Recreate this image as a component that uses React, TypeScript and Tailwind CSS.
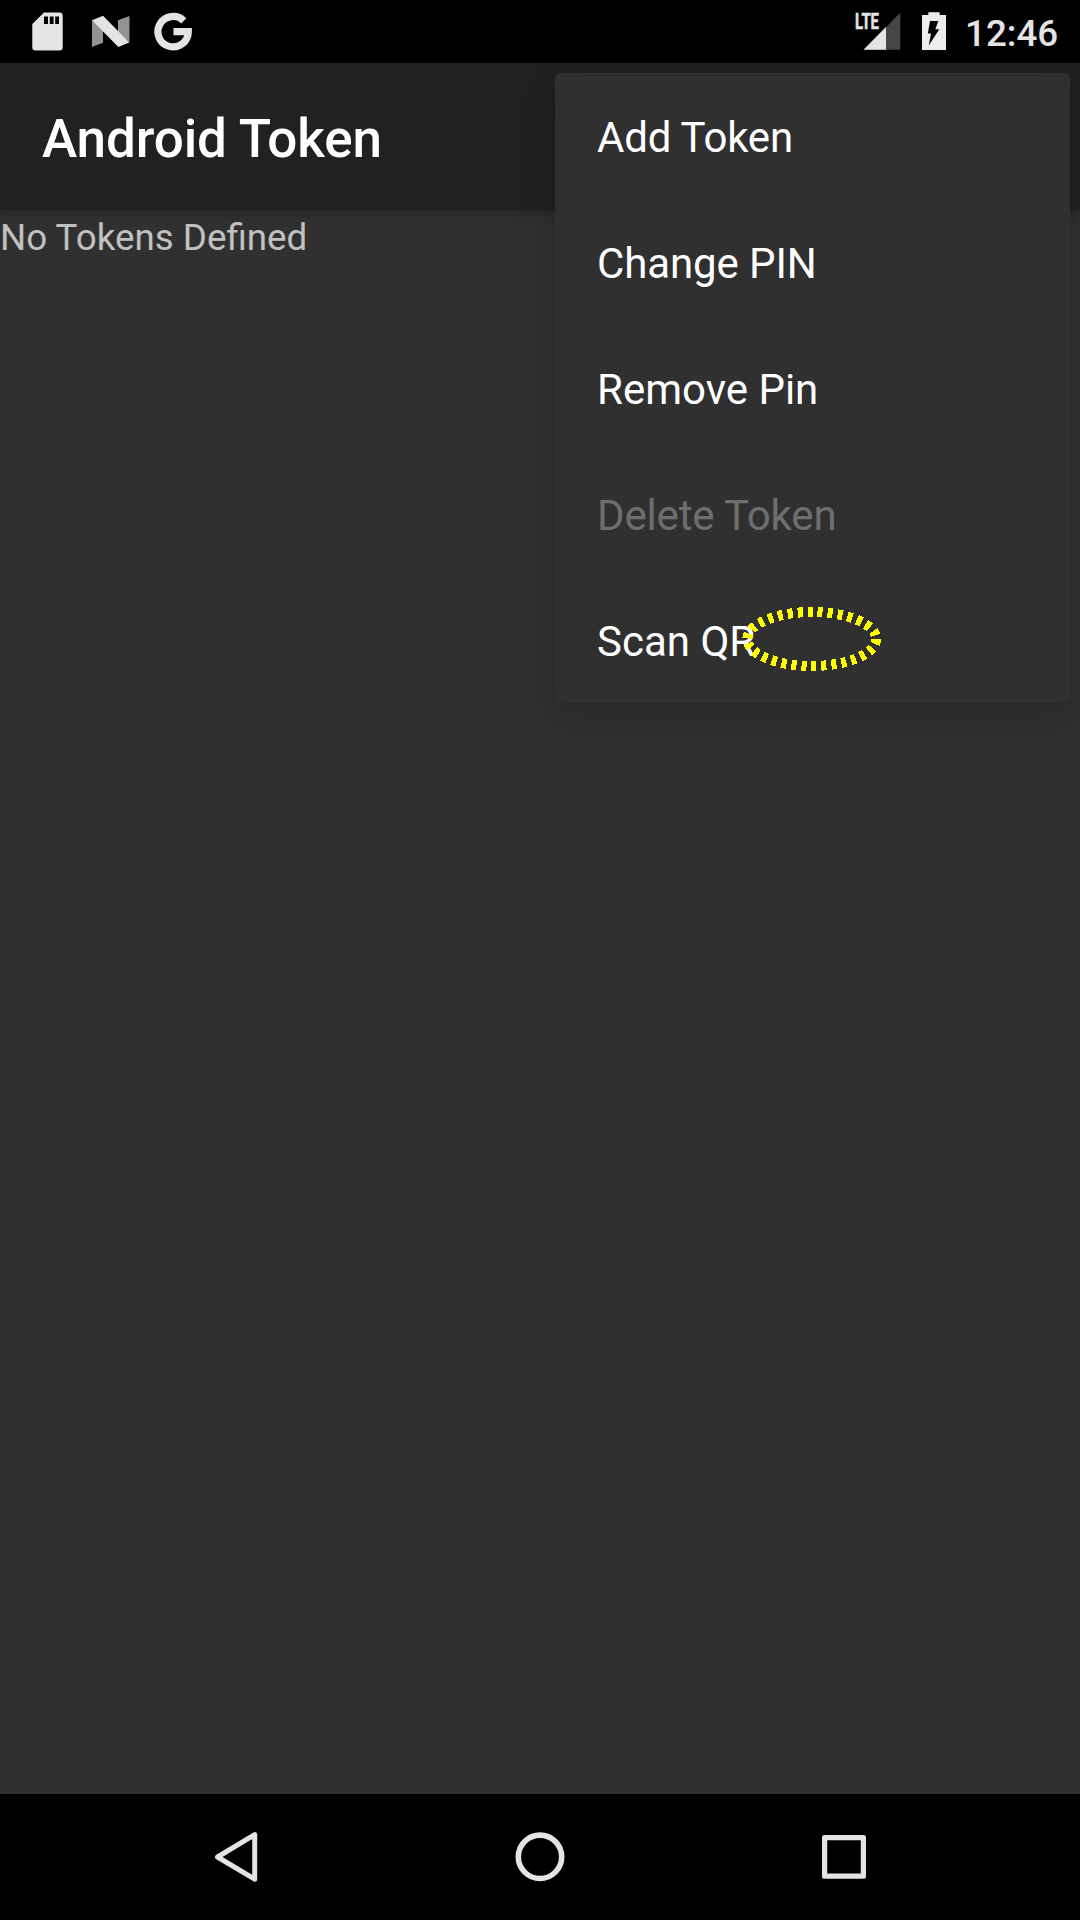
const menuItems = [
  { label: 'Add Token', style: 'text-white tracking-[-0.2px]' },
  { label: 'Change PIN', style: 'text-white tracking-[-0.1px]' },
  { label: 'Remove Pin', style: 'text-white' },
  { label: 'Delete Token', style: 'text-[#6e6e6e] tracking-[-0.15px]' },
  { label: 'Scan QR', style: 'text-white' },
];

function StatusBar() {
  return (
    <div className="flex h-[63px] items-start justify-between bg-black pr-[21px] pl-[32px]">
      <div className="flex">
        <svg width="31" height="63" viewBox="32 0 31 63" fill="#e4e4e4">
          <path
            fillRule="evenodd"
            d="M44 12.5H59.5Q62.7 12.5 62.7 15.7V47.3Q62.7 50.5 59.5 50.5H35.5Q32.3 50.5 32.3 47.3V24ZM44 16.5V24H48V16.5ZM49.8 16.5V24H53.6V16.5ZM55.2 16.5V24H59V16.5Z"
          />
        </svg>
        <svg className="ml-[28px]" width="39" height="63" viewBox="91 0 39 63">
          <path d="M92 20V47L103 42.7V30ZM118 20.3L129.5 16V42L118 34Z" fill="#929292" />
          <path d="M92 20.3L103 15.8L129.3 42.4L118.3 47Z" fill="#e4e4e4" />
        </svg>
        <svg className="ml-[24px]" width="40" height="63" viewBox="154 0 40 63">
          <path
            d="M183.8 20.9A15.2 15.2 0 1 0 188.3 31.7H173.5"
            fill="none"
            stroke="#e4e4e4"
            strokeWidth="7.2"
          />
        </svg>
      </div>
      <div className="flex">
        <svg width="48" height="63" viewBox="854 0 48 63">
          <text
            x="855"
            y="29"
            fill="#e4e4e4"
            stroke="#e4e4e4"
            strokeWidth="0.5"
            fontFamily="Roboto, sans-serif"
            fontWeight="700"
            fontSize="21.5"
            textLength="24"
            lengthAdjust="spacingAndGlyphs"
          >
            LTE
          </text>
          <path d="M863.5 49.7L900.3 12.8V49.7Z" fill="#464646" />
          <path d="M863.5 49.7L886 27V49.7Z" fill="#e4e4e4" />
        </svg>
        <svg className="ml-[18px]" width="28" height="63" viewBox="920 0 28 63">
          <path d="M928.3 12.3H939.7V15H946V50H922V15H928.3Z" fill="#ececec" />
          <path d="M930 21H938.3L935.3 29.3H939.3L928.7 45.5L931 33.5H927.8Z" fill="#000" />
        </svg>
        <span className="ml-[17px] w-[94px] pt-[6px] text-[36.75px] leading-[56px] font-medium whitespace-nowrap text-[#e4e4e4]">12:46</span>
      </div>
    </div>
  );
}

function NavigationBar() {
  return (
    <div className="flex h-[126px] items-center justify-between bg-black px-[206px]">
      <svg width="60" height="60" viewBox="206 1827 60 60" fill="none" stroke="#e4e4e4" strokeWidth="5" strokeLinejoin="round">
        <path d="M254.7 1834.6V1879.2L217.5 1857Z" />
      </svg>
      <svg width="60" height="60" viewBox="510 1827 60 60" fill="none" stroke="#e4e4e4" strokeWidth="5.6">
        <circle cx="540" cy="1856.8" r="21.7" />
      </svg>
      <svg width="60" height="60" viewBox="814 1827 60 60" fill="none" stroke="#e4e4e4" strokeWidth="5.2" strokeLinejoin="round">
        <rect x="824.6" y="1837.6" width="38.8" height="38.6" />
      </svg>
    </div>
  );
}

function OverflowMenu() {
  return (
    <div className="absolute top-[73px] left-[555px] w-[515px] rounded-[5px] bg-[#303030] shadow-[0_14px_40px_rgba(0,0,0,0.16),0_0_10px_rgba(0,0,0,0.06)]">
      {menuItems.map((item) => (
        <div
          key={item.label}
          className={`flex h-[126px] items-center px-[42px] pt-[2px] text-[42px] leading-[49px] ${item.style}`}
        >
          {item.label}
        </div>
      ))}
      <svg className="absolute top-[529px] left-[182px]" width="150" height="74" viewBox="737 602 150 74">
        <ellipse
          cx="811.7"
          cy="639"
          rx="64.4"
          ry="27"
          fill="none"
          stroke="#ffff00"
          strokeWidth="10"
          strokeDasharray="5 5"
          shapeRendering="crispEdges"
        />
      </svg>
    </div>
  );
}

export default function App() {
  return (
    <div className="relative flex h-[1920px] w-[1080px] flex-col overflow-hidden bg-[#303030] font-[Roboto,sans-serif]">
      <StatusBar />
      <header className="flex h-[147px] items-center bg-[#212121] px-[42px] pt-[5px] shadow-[0_4px_10px_rgba(0,0,0,0.2)]">
        <h1 className="text-[53px] leading-[62px] font-medium tracking-[-0.1px] text-white">Android Token</h1>
      </header>
      <main className="flex-1 pt-[6px] text-[36.75px] leading-[44px] text-[#c1c1c1]">No Tokens Defined</main>
      <NavigationBar />
      <OverflowMenu />
    </div>
  );
}
